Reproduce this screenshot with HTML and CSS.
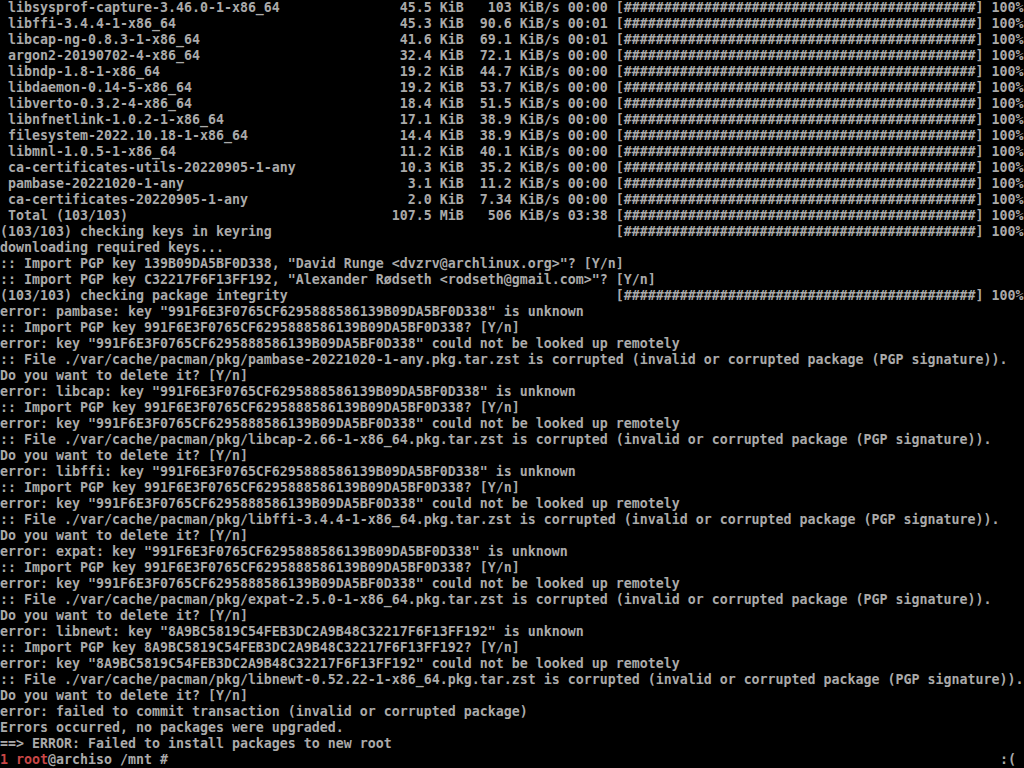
FILE: index.html
```html
<!DOCTYPE html>
<html lang="en">
<head>
    <meta charset="UTF-8">
    <title>tty1 - archiso</title>
    <link rel="stylesheet" href="styles.css">
</head>
<body>

    <div class="screen">
<pre class="output"> libsysprof-capture-3.46.0-1-x86_64               45.5 KiB   103 KiB/s 00:00 [############################################] 100%
 libffi-3.4.4-1-x86_64                            45.3 KiB  90.6 KiB/s 00:01 [############################################] 100%
 libcap-ng-0.8.3-1-x86_64                         41.6 KiB  69.1 KiB/s 00:01 [############################################] 100%
 argon2-20190702-4-x86_64                         32.4 KiB  72.1 KiB/s 00:00 [############################################] 100%
 libndp-1.8-1-x86_64                              19.2 KiB  44.7 KiB/s 00:00 [############################################] 100%
 libdaemon-0.14-5-x86_64                          19.2 KiB  53.7 KiB/s 00:00 [############################################] 100%
 libverto-0.3.2-4-x86_64                          18.4 KiB  51.5 KiB/s 00:00 [############################################] 100%
 libnfnetlink-1.0.2-1-x86_64                      17.1 KiB  38.9 KiB/s 00:00 [############################################] 100%
 filesystem-2022.10.18-1-x86_64                   14.4 KiB  38.9 KiB/s 00:00 [############################################] 100%
 libmnl-1.0.5-1-x86_64                            11.2 KiB  40.1 KiB/s 00:00 [############################################] 100%
 ca-certificates-utils-20220905-1-any             10.3 KiB  35.2 KiB/s 00:00 [############################################] 100%
 pambase-20221020-1-any                            3.1 KiB  11.2 KiB/s 00:00 [############################################] 100%
 ca-certificates-20220905-1-any                    2.0 KiB  7.34 KiB/s 00:00 [############################################] 100%
 Total (103/103)                                 107.5 MiB   506 KiB/s 03:38 [############################################] 100%
(103/103) checking keys in keyring                                           [############################################] 100%
downloading required keys...
:: Import PGP key 139B09DA5BF0D338, "David Runge &lt;dvzrv@archlinux.org&gt;"? [Y/n]
:: Import PGP key C32217F6F13FF192, "Alexander Rødseth &lt;rodseth@gmail.com&gt;"? [Y/n]
(103/103) checking package integrity                                         [############################################] 100%
error: pambase: key "991F6E3F0765CF6295888586139B09DA5BF0D338" is unknown
:: Import PGP key 991F6E3F0765CF6295888586139B09DA5BF0D338? [Y/n]
error: key "991F6E3F0765CF6295888586139B09DA5BF0D338" could not be looked up remotely
:: File ./var/cache/pacman/pkg/pambase-20221020-1-any.pkg.tar.zst is corrupted (invalid or corrupted package (PGP signature)).
Do you want to delete it? [Y/n]
error: libcap: key "991F6E3F0765CF6295888586139B09DA5BF0D338" is unknown
:: Import PGP key 991F6E3F0765CF6295888586139B09DA5BF0D338? [Y/n]
error: key "991F6E3F0765CF6295888586139B09DA5BF0D338" could not be looked up remotely
:: File ./var/cache/pacman/pkg/libcap-2.66-1-x86_64.pkg.tar.zst is corrupted (invalid or corrupted package (PGP signature)).
Do you want to delete it? [Y/n]
error: libffi: key "991F6E3F0765CF6295888586139B09DA5BF0D338" is unknown
:: Import PGP key 991F6E3F0765CF6295888586139B09DA5BF0D338? [Y/n]
error: key "991F6E3F0765CF6295888586139B09DA5BF0D338" could not be looked up remotely
:: File ./var/cache/pacman/pkg/libffi-3.4.4-1-x86_64.pkg.tar.zst is corrupted (invalid or corrupted package (PGP signature)).
Do you want to delete it? [Y/n]
error: expat: key "991F6E3F0765CF6295888586139B09DA5BF0D338" is unknown
:: Import PGP key 991F6E3F0765CF6295888586139B09DA5BF0D338? [Y/n]
error: key "991F6E3F0765CF6295888586139B09DA5BF0D338" could not be looked up remotely
:: File ./var/cache/pacman/pkg/expat-2.5.0-1-x86_64.pkg.tar.zst is corrupted (invalid or corrupted package (PGP signature)).
Do you want to delete it? [Y/n]
error: libnewt: key "8A9BC5819C54FEB3DC2A9B48C32217F6F13FF192" is unknown
:: Import PGP key 8A9BC5819C54FEB3DC2A9B48C32217F6F13FF192? [Y/n]
error: key "8A9BC5819C54FEB3DC2A9B48C32217F6F13FF192" could not be looked up remotely
:: File ./var/cache/pacman/pkg/libnewt-0.52.22-1-x86_64.pkg.tar.zst is corrupted (invalid or corrupted package (PGP signature)).
Do you want to delete it? [Y/n]
error: failed to commit transaction (invalid or corrupted package)
Errors occurred, no packages were upgraded.
==&gt; ERROR: Failed to install packages to new root</pre>
        <div class="prompt">
            <span><span class="red">1 root</span>@archiso /mnt # </span>
            <span>:(</span>
        </div>
    </div>

</body>
</html>
```

FILE: styles.css
```css
html, body { margin: 0; padding: 0; background: #000; }
body { width: 1024px; height: 768px; overflow: hidden; }
.screen { font-family: "DejaVu Sans Mono", monospace; font-size: 13.29px; font-weight: bold; line-height: 16px; color: #aaa; }
.output { margin: 0; font: inherit; white-space: pre; }
.prompt { display: flex; justify-content: space-between; padding-right: 8px; white-space: pre; }
.red { color: #c84646; }
```
